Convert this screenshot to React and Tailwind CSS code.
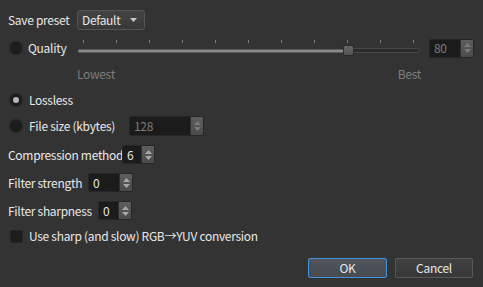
import React from "react";

const font = { fontFamily: '"Noto Sans CJK JP", "Liberation Sans", sans-serif' };

function Radio({ checked }) {
  return (
    <div className="w-[14px] h-[14px] rounded-full bg-[#1d1d1d] border border-[#262626] flex items-center justify-center shrink-0">
      {checked && <div className="w-[6px] h-[6px] rounded-full bg-[#b4b4b4]" />}
    </div>
  );
}

function Spin({ value, width, disabled, height = "h-[19px]" }) {
  return (
    <div className={`flex ${height} border border-[#262626] rounded-[2px] overflow-hidden shrink-0`} style={{ width }}>
      <div className={`flex-1 bg-[#1b1b1b] flex items-center pl-[4px] ${disabled ? "text-[#7c7c7c]" : "text-[#e8e8e8]"}`}>
        {value}
      </div>
      <div className="w-[13px] bg-gradient-to-b from-[#5e5e5e] to-[#4a4a4a] flex flex-col items-center justify-center gap-[2px] border-l border-[#2e2e2e]">
        <svg width="7" height="4" viewBox="0 0 7 4"><path d="M0 4 L3.5 0 L7 4 Z" fill={disabled ? "#7a7a7a" : "#a8a8a8"} /></svg>
        <svg width="7" height="4" viewBox="0 0 7 4"><path d="M0 0 L3.5 4 L7 0 Z" fill={disabled ? "#7a7a7a" : "#a8a8a8"} /></svg>
      </div>
    </div>
  );
}

function Slider() {
  const ticks = Array.from({ length: 11 });
  return (
    <div className="relative w-[342px] h-[20px] shrink-0">
      <div className="absolute left-[5px] right-[6px] top-[2px] flex justify-between">
        {ticks.map((_, i) => (
          <div key={i} className="w-px h-[3px] bg-[#7a7a7a]" />
        ))}
      </div>
      <div className="absolute left-0 top-[11px] w-[268px] h-[4px] bg-[#8c8c8c] border-y border-[#5a5a5a] rounded-l-[2px]" />
      <div className="absolute left-[268px] right-[0px] top-[10px] h-[5px] bg-[#2b2b2b] border border-[#484848] rounded-r-[3px]" />
      <div className="absolute left-[265px] top-[7px] w-[11px] h-[11px] rounded-[2px] bg-gradient-to-b from-[#666] to-[#555] border border-[#2a2a2a]" />
    </div>
  );
}

export default function App() {
  return (
    <div className="w-[483px] h-[287px] bg-[#333333] text-[#e8e8e8] text-[12px] leading-none tracking-[-0.3px] relative whitespace-nowrap" style={font}>
      <div className="flex flex-col pt-[10px]">
        <div className="flex items-center h-[20px] pl-[8px]">
          <span className="w-[69px] shrink-0">Save preset</span>
          <div className="w-[68px] h-[20px] rounded-[3px] border border-[#555] bg-gradient-to-b from-[#434343] to-[#383838] flex items-center justify-between pl-[4px] pr-[7px]">
            <span>Default</span>
            <svg width="7" height="4" viewBox="0 0 7 4"><path d="M0 0 L7 0 L3.5 4 Z" fill="#c8c8c8" /></svg>
          </div>
        </div>
        <div className="flex items-center h-[20px] mt-[8px] pl-[9px]">
          <Radio />
          <span className="ml-[5px] w-[50px] shrink-0">Quality</span>
          <Slider />
          <div className="ml-[9px]">
            <Spin value="80" width="45px" disabled />
          </div>
        </div>
        <div className="flex justify-between h-[14px] mt-[9px] pl-[77px] pr-[62px] text-[#7e7e7e] items-center">
          <span>Lowest</span>
          <span>Best</span>
        </div>
        <div className="flex items-center h-[20px] mt-[9px] pl-[9px]">
          <Radio checked />
          <span className="ml-[6px]">Lossless</span>
        </div>
        <div className="flex items-center h-[20px] mt-[6px] pl-[9px]">
          <Radio />
          <span className="ml-[6px] w-[100px] shrink-0">File size (kbytes)</span>
          <Spin value="128" width="75px" disabled height="h-[20px]" />
        </div>
        <div className="flex items-center h-[19px] mt-[9px] pl-[8px]">
          <span className="w-[114px] shrink-0">Compression method</span>
          <Spin value="6" width="33px" />
        </div>
        <div className="flex items-center h-[19px] mt-[9px] pl-[8px]">
          <span className="w-[80px] shrink-0">Filter strength</span>
          <Spin value="0" width="45px" />
        </div>
        <div className="flex items-center h-[19px] mt-[9px] pl-[8px]">
          <span className="w-[90px] shrink-0">Filter sharpness</span>
          <Spin value="0" width="34px" />
        </div>
        <div className="flex items-center h-[14px] mt-[9px] pl-[10px]">
          <div className="w-[13px] h-[13px] bg-[#1d1d1d] border border-[#262626]" />
          <span className="ml-[6px]">Use sharp (and slow) RGB→YUV conversion</span>
        </div>
        <div className="flex justify-end gap-[8px] mt-[15px] pr-[10px]">
          <button className="w-[79px] h-[20px] rounded-[2px] border border-[#4a90d9] bg-gradient-to-b from-[#50555d] to-[#464b52] text-[#e8e8e8]">OK</button>
          <button className="w-[78px] h-[20px] rounded-[2px] border border-[#585858] bg-gradient-to-b from-[#404040] to-[#383838] text-[#e8e8e8]">Cancel</button>
        </div>
      </div>
    </div>
  );
}
